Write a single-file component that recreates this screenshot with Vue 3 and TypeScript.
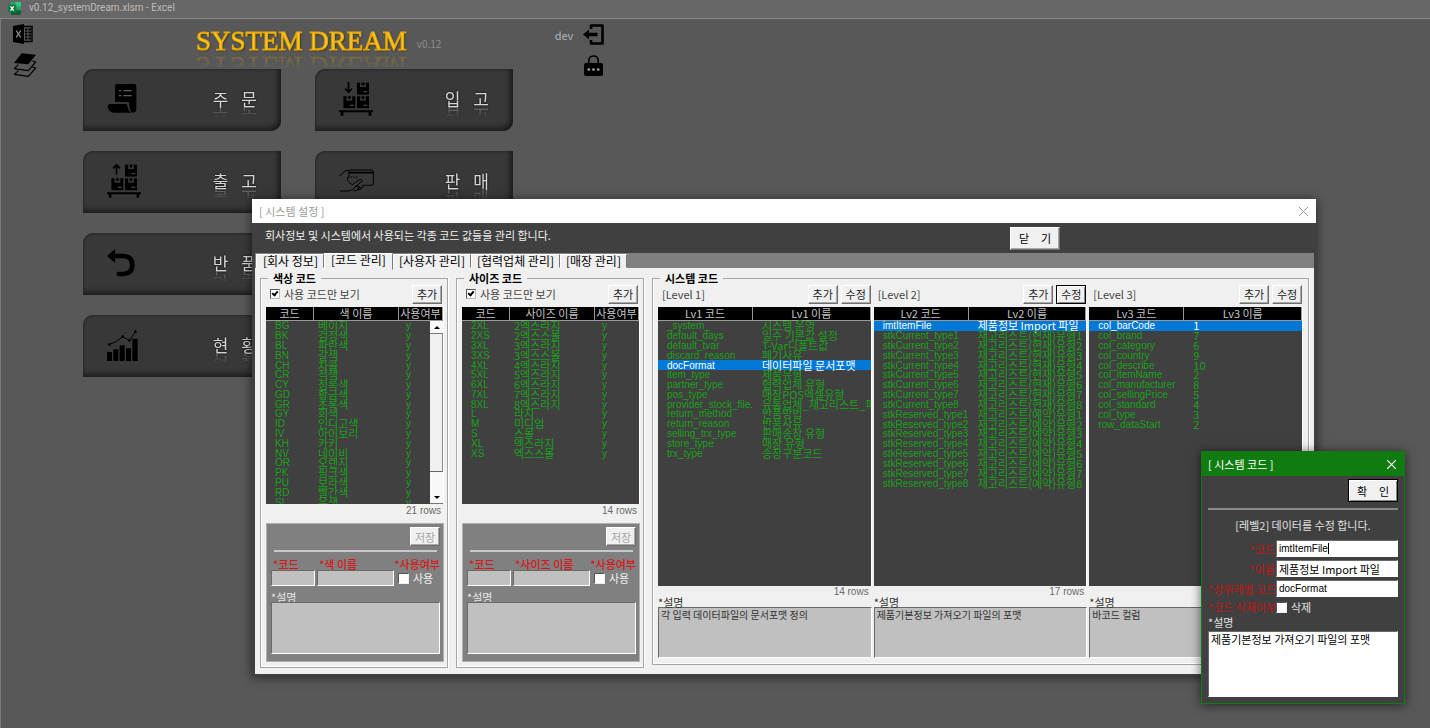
<script setup lang="ts">
import { ref } from 'vue'

interface MenuItem { icon: string; label: string[]; column: 'left' | 'right' }
interface CodePanel {
  id: string
  title: string
  nameHead: string
  rows: string[][]
  count: number
  scroll: boolean
}
interface Level {
  id: string
  label: string
  heads: string[]
  rows: string[][]
  selected: number
  count: string
  focusEdit: boolean
  note: string
}

const menu: MenuItem[] = [
  { icon: 'order', label: ['주', '문'], column: 'left' },
  { icon: 'inbound', label: ['입', '고'], column: 'right' },
  { icon: 'outbound', label: ['출', '고'], column: 'left' },
  { icon: 'sale', label: ['판', '매'], column: 'right' },
  { icon: 'return', label: ['반', '품'], column: 'left' },
  { icon: 'status', label: ['현', '황'], column: 'left' },
]

const tabs = ['[회사 정보]', '[코드 관리]', '[사용자 관리]', '[협력업체 관리]', '[매장 관리]']
const activeTab = ref(1)

const pairs = (text: string): string[][] => text.split('|').map((line) => line.split('='))

const panels: CodePanel[] = [
  {
    id: 'color',
    title: '색상 코드',
    nameHead: '색 이름',
    rows: pairs('BG=베이지|BK=검정색|BL=파란색|BN=갈색|CH=차콜|CR=적색|CY=청록색|GD=황금색|GR=초록색|GY=회색|ID=인디고색|IV=아이보리|KH=카키|NV=네이비|OR=오렌지|PK=핑크색|PU=보라색|RD=빨간색|SL=은색'),
    count: 21,
    scroll: true,
  },
  {
    id: 'size',
    title: '사이즈 코드',
    nameHead: '사이즈 이름',
    rows: pairs('2XL=2엑스라지|2XS=2엑스스몰|3XL=3엑스라지|3XS=3엑스스몰|4XL=4엑스라지|5XL=5엑스라지|6XL=6엑스라지|7XL=7엑스라지|8XL=8엑스라지|L=라지|M=미디엄|S=스몰|XL=엑스라지|XS=엑스스몰'),
    count: 14,
    scroll: false,
  },
]

const numbered = (code: string, name: string): string[][] =>
  Array.from({ length: 8 }, (_, i) => [`${code}${i + 1}`, `${name}${i + 1}`])

const levels: Level[] = [
  {
    id: 'lv1',
    label: '[Level 1]',
    heads: ['Lv1 코드', 'Lv1 이름'],
    rows: pairs('_system_=시스템 운영|default_days=일수 기본값 설정|default_tvar=T-Var디폴트값|discard_reason=폐기사유|docFormat=데이터파일 문서포맷|item_type=제품유형|partner_type=협력업체 유형|pos_type=매장POS엑셀유형|provider_stock_file.=유통업체_재고리스트_파일|return_method=반품방법|return_reason=반품사유|selling_trx_type=판매송장 유형|store_type=매장 유형|trx_type=송장구분코드'),
    selected: 4,
    count: '14 rows',
    focusEdit: false,
    note: '각 입력 데이터파일의 문서포맷 정의',
  },
  {
    id: 'lv2',
    label: '[Level 2]',
    heads: ['Lv2 코드', 'Lv2 이름'],
    rows: [
      ['imtItemFile', '제품정보 Import 파일'],
      ...numbered('stkCurrent_type', '재고리스트(현재)유형'),
      ...numbered('stkReserved_type', '재고리스트(예약)유형'),
    ],
    selected: 0,
    count: '17 rows',
    focusEdit: true,
    note: '제품기본정보 가져오기 파일의 포맷',
  },
  {
    id: 'lv3',
    label: '[Level 3]',
    heads: ['Lv3 코드', 'Lv3 이름'],
    rows: pairs('col_barCode=1|col_brand=7|col_category=6|col_country=9|col_describe=10|col_itemName=2|col_manufacturer=8|col_sellingPrice=5|col_standard=4|col_type=3|row_dataStart=2'),
    selected: 0,
    count: '',
    focusEdit: false,
    note: '바코드 컬럼',
  },
]

const HEAD_HEIGHT = 14
const tableHeight = (rows: string[][]): string =>
  `${HEAD_HEIGHT + Math.round((rows.length * 49) / 5)}px`

const form = ref({
  code: 'imtItemFile',
  name: '제품정보 Import 파일',
  parent: 'docFormat',
  remove: false,
  note: '제품기본정보 가져오기 파일의 포맷',
})
</script>

<template>
  <div class="app">
    <header class="titlebar">
      <svg class="xl" viewBox="0 0 14 14" aria-hidden="true">
        <rect x="3" y="0" width="11" height="14" rx="1" fill="#21a366" />
        <rect x="8" y="0" width="6" height="5" fill="#33c481" />
        <rect x="3" y="9" width="11" height="5" rx="1" fill="#185c37" />
        <rect x="0" y="3" width="9" height="8" rx="1" fill="#107c41" />
        <path d="M2.7 4.8 6.2 9.2M6.2 4.8 2.7 9.2" stroke="#fff" stroke-width="1.3" />
      </svg>
      <span>v0.12_systemDream.xlsm - Excel</span>
    </header>

    <main class="sheet">
      <nav class="rail">
        <button type="button" aria-label="Excel">
          <svg width="20" height="20" viewBox="0 0 20 20">
            <path d="M0 2 11 0v20L0 18z" />
            <path d="M3.200 6.5 7.800 13.500M7.800 6.500 3.200 13.500" stroke="#999" stroke-width="1.200" />
            <path d="M11 2.500h8v15h-8" fill="none" stroke="#000" stroke-width="1.400" />
            <path d="M12 5.500h6M12 8.500h6M12 11.500h6M12 14.500h6" stroke="#000" stroke-width="1.800" stroke-dasharray="2.500 1" />
          </svg>
        </button>
        <button type="button" aria-label="Layers">
          <svg width="24" height="24" viewBox="0 0 72 72">
            <path d="M26 1 69 5 46 34 3 30z" />
            <path d="M16 35 4 47 46 53 68 27 58 24M16 53 4 64 46 70 68 45 58 42" fill="none" stroke="#000" stroke-width="3.500" stroke-linejoin="round" />
          </svg>
        </button>
      </nav>

      <div class="center">
        <div class="brand">
          <h1>SYSTEM DREAM</h1>
          <span>v0.12</span>
        </div>
        <div class="menu">
          <button v-for="item in menu" :key="item.icon" type="button" class="tile" :class="item.column">
            <svg v-if="item.icon === 'order'" width="30" height="30" viewBox="-2 0 90 90">
              <path d="M22 54V6q0-6 6-6h52q6 0 6 6v70q0 10-9 10-9 0-11-14l-3-18z" />
              <path d="M8 60h50q3 22 14 26H22Q2 86 0 68q0-8 8-8z" />
              <path d="M34 20h7M47 20h25M34 35h7M47 35h25" stroke="#5c5c5c" stroke-width="4" />
              <path d="M22 57h38q2 20 9 24" fill="none" stroke="#383838" stroke-width="3" />
            </svg>
            <svg v-else-if="item.icon === 'inbound' || item.icon === 'outbound'" width="34" height="34" viewBox="0 0 100 100">
              <path v-if="item.icon === 'inbound'" d="M28 0v28M18 19l10 11 10-11" fill="none" stroke="#000" stroke-width="5" />
              <path v-else d="M28 31V4M18 13 28 2l10 11" fill="none" stroke="#000" stroke-width="5" />
              <g v-for="[x, y] in [[53, 2], [13, 42], [53, 42]]" :key="`${x}-${y}`">
                <rect :x="x" :y="y" width="35" height="35" />
                <rect :x="x + 9" :y="y - 1" width="17" height="14" fill="#383838" />
                <path :d="`M${x + 13} ${y}h9v6l-4.500 3-4.500-3z`" />
                <rect :x="x + 19" :y="y + 25" width="11" height="3" fill="#555" />
              </g>
              <path d="M0 83h100v6H95v10h-8V89H13v10H5V89H0z" />
            </svg>
            <svg v-else-if="item.icon === 'sale'" width="35" height="24" viewBox="0 0 105 72" fill="none" stroke="#000" stroke-width="3" stroke-linejoin="round" stroke-linecap="round">
              <path d="M2 20 20 5h10" />
              <path d="M30 26V7q0-4 4-4h64q5 0 5 5v36q0 5-5 5H72" />
              <path d="M30 11h73" stroke-width="5" />
              <path d="M36 24h2M44 24h2M52 24h2" />
              <path d="M26 26q-3 10 4 14l10 7 20-14q8-4 10 1 0 4-6 7L50 52q-8 14-22 14H4" />
              <path d="M52 52h8q2 7-3 8M60 56h8q5-1 4-7M57 61q-4 6-12 5M68 57q-2 6-10 6" />
            </svg>
            <svg v-else-if="item.icon === 'return'" width="28" height="28" viewBox="0 0 84 84">
              <path d="M16 21h34q26 2 26 27t-26 27H36" fill="none" stroke="#000" stroke-width="14" stroke-linecap="round" />
              <path d="M0 21 24 0v42z" />
            </svg>
            <svg v-else width="31" height="31" viewBox="0 0 93 93">
              <path d="M0 66h15v27H0zM19 58h15v35H19zM38 46h15v47H38zM57 55h15v38H57zM76 26h16v67H76z" />
              <path d="M6 44 27 35 47 20 67 32 85 5" fill="none" stroke="#000" stroke-width="3" />
              <circle cx="85" cy="5" r="4" /><circle cx="67" cy="31" r="4" /><circle cx="47" cy="20" r="4" /><circle cx="7" cy="44" r="4" />
            </svg>
            <span class="tile-label"><span v-for="ch in item.label" :key="ch">{{ ch }}</span></span>
          </button>
        </div>
      </div>

      <div class="session">
        <span class="user">dev</span>
        <button type="button" aria-label="Logout">
          <svg width="21" height="21" viewBox="0 0 21 21">
            <path d="M8 5V1.500h11.500v18H8V16" fill="none" stroke="#000" stroke-width="2.600" stroke-linejoin="round" />
            <path d="M0 10.500 6 5.500v3.300h8.500v3.400H6v3.300z" />
          </svg>
        </button>
        <button type="button" class="lock" aria-label="Password">
          <svg width="19" height="21" viewBox="0 0 19 21">
            <path d="M4.800 9V6q0-5 4.700-5t4.700 5v3" fill="none" stroke="#000" stroke-width="1.600" />
            <rect x="0" y="8" width="19" height="13" rx="2" />
            <g fill="#aaa"><circle cx="4.800" cy="14.500" r="1.300" /><circle cx="9.500" cy="14.500" r="1.300" /><circle cx="14.200" cy="14.500" r="1.300" /></g>
          </svg>
        </button>
      </div>
    </main>

    <section class="dialog settings" role="dialog" aria-label="시스템 설정">
      <div class="dialog-title">
        <span>[ 시스템 설정 ]</span>
        <button type="button" class="x" aria-label="Close">
          <svg width="9" height="9" viewBox="0 0 9 9"><path d="M0 0 9 9M9 0 0 9" stroke="currentColor" /></svg>
        </button>
      </div>
      <div class="info">
        <p>회사정보 및 시스템에서 사용되는 각종 코드 값들을 관리 합니다.</p>
        <button type="button" class="btn wide"><span>닫</span><span>기</span></button>
      </div>
      <div class="tabs" role="tablist">
        <button
          v-for="(tab, i) in tabs"
          :key="tab"
          type="button"
          role="tab"
          :aria-selected="i === activeTab"
          :class="{ active: i === activeTab }"
          @click="activeTab = i"
        >{{ tab }}</button>
      </div>

      <div class="page">
        <fieldset v-for="panel in panels" :key="panel.id" class="group code-group">
          <legend>{{ panel.title }}</legend>
          <div class="tools">
            <label class="only"><input type="checkbox" class="check small" checked />사용 코드만 보기</label>
            <button type="button" class="btn">추가</button>
          </div>
          <div class="list short">
            <table :style="{ height: tableHeight(panel.rows) }">
              <colgroup><col class="c-code" /><col /><col class="c-use" /></colgroup>
              <thead><tr><th>코드</th><th>{{ panel.nameHead }}</th><th>사용여부</th></tr></thead>
              <tbody>
                <tr v-for="row in panel.rows" :key="row[0]">
                  <td class="code">{{ row[0] }}</td><td>{{ row[1] }}</td><td class="code use">y</td>
                </tr>
              </tbody>
            </table>
            <div v-if="panel.scroll" class="scroll" aria-hidden="true">
              <span class="arrow up"></span>
              <span class="thumb"></span>
              <span class="track"></span>
              <span class="arrow down"></span>
            </div>
          </div>
          <p class="count">{{ panel.count }} rows</p>
          <div class="edit">
            <button type="button" class="btn" disabled>저장</button>
            <hr />
            <div class="fields">
              <label class="req first" :for="`${panel.id}-code`">*코드</label>
              <label class="req" :for="`${panel.id}-name`">*{{ panel.nameHead }}</label>
              <label class="req last" :for="`${panel.id}-use`">*사용여부</label>
              <input :id="`${panel.id}-code`" type="text" class="box" />
              <input :id="`${panel.id}-name`" type="text" class="box" />
              <label class="use-check"><input :id="`${panel.id}-use`" type="checkbox" class="check" />사용</label>
            </div>
            <label class="note-label" :for="`${panel.id}-note`">*설명</label>
            <textarea :id="`${panel.id}-note`" class="box"></textarea>
          </div>
        </fieldset>

        <fieldset class="group system-group">
          <legend>시스템 코드</legend>
          <div class="levels">
            <div v-for="level in levels" :key="level.id" class="level">
              <div class="tools">
                <span class="level-name">{{ level.label }}</span>
                <button type="button" class="btn">추가</button>
                <button type="button" class="btn" :class="{ focused: level.focusEdit }">수정</button>
              </div>
              <div class="list tall">
                <table :style="{ height: tableHeight(level.rows) }">
                  <colgroup><col class="c-level" /><col /></colgroup>
                  <thead><tr><th v-for="head in level.heads" :key="head">{{ head }}</th></tr></thead>
                  <tbody>
                    <tr v-for="(row, i) in level.rows" :key="row[0]" :class="{ selected: i === level.selected }">
                      <td class="code">{{ row[0] }}</td><td class="name">{{ row[1] }}</td>
                    </tr>
                  </tbody>
                </table>
              </div>
              <p class="count">{{ level.count }}</p>
              <label class="note-label" :for="`${level.id}-note`">*설명</label>
              <textarea :id="`${level.id}-note`" class="box" :value="level.note" readonly></textarea>
            </div>
          </div>
        </fieldset>
      </div>
    </section>

    <section class="dialog editor" role="dialog" aria-label="시스템 코드">
      <div class="dialog-title">
        <span>[ 시스템 코드 ]</span>
        <button type="button" class="x" aria-label="Close">
          <svg width="9" height="9" viewBox="0 0 9 9"><path d="M0 0 9 9M9 0 0 9" stroke="currentColor" stroke-width="1.200" /></svg>
        </button>
      </div>
      <form class="editor-body" @submit.prevent>
        <button type="submit" class="btn wide focused"><span>확</span><span>인</span></button>
        <hr />
        <p>[레벨2] 데이터를 수정 합니다.</p>
        <div class="editor-fields">
          <label for="f-code">*코드</label>
          <div class="caret-box box"><input id="f-code" v-model="form.code" type="text" class="code" /></div>
          <label for="f-name">*이름</label>
          <input id="f-name" v-model="form.name" type="text" class="box" />
          <label for="f-parent">*상위레벨 코드</label>
          <input id="f-parent" v-model="form.parent" type="text" class="box code" />
          <label for="f-remove">*코드 삭제여부</label>
          <div class="remove"><input id="f-remove" v-model="form.remove" type="checkbox" class="check" />삭제</div>
        </div>
        <label class="note-label" for="f-note">*설명</label>
        <textarea id="f-note" v-model="form.note" class="box"></textarea>
      </form>
    </section>
  </div>
</template>

<style>
body {
  margin: 0;
  background: #585858;
}
</style>

<style scoped>
.app {
  position: relative;
  min-height: 100vh;
  overflow: hidden;
  background: #585858;
  color: #000;
  font-family: "Noto Sans CJK KR", "Liberation Sans", sans-serif;
  font-size: 11px;
  line-height: 12px;
}
.app *,
.app *::before {
  box-sizing: border-box;
}
button,
input,
textarea {
  font: inherit;
}
button {
  padding: 0;
  border: 0;
  background: none;
}
p {
  margin: 0;
}

/* workbook window */
.titlebar {
  display: flex;
  align-items: center;
  gap: 8px;
  height: 19px;
  padding: 0 8px 2px;
  border-bottom: 1px solid #868686;
  background: #676767;
  color: #bcbcbc;
  font-family: Roboto, sans-serif;
  font-size: 10px;
}
.xl {
  width: 13px;
  height: 13px;
}
.sheet {
  display: flex;
  align-items: flex-start;
  min-height: calc(100vh - 19px);
  border-left: 1px solid #7a7a7a;
}
.rail {
  display: flex;
  flex-direction: column;
  gap: 9px;
  width: 82px;
  padding: 5px 11px 5px 12px;
}
.rail button,
.session button {
  display: flex;
}
.center {
  width: 430px;
}
.brand {
  display: flex;
  align-items: flex-start;
  gap: 10px;
  height: 50px;
  padding: 5px 0 0 113px;
}
.brand h1 {
  margin: 0;
  color: #f6c92c;
  font-family: "Liberation Serif", serif;
  font-size: 27px;
  font-weight: 400;
  line-height: 34px;
  -webkit-text-stroke: 1px #e5a400;
  text-shadow: 1px 1px 2px #3c2e00;
  white-space: nowrap;
  -webkit-box-reflect: below -9px linear-gradient(transparent 40%, rgba(0, 0, 0, 0.3));
}
.brand span {
  padding-top: 14px;
  color: #8c8c8c;
  font-size: 10px;
}
.menu {
  display: grid;
  grid-template-columns: 1fr 1fr;
  gap: 20px 34px;
}
.tile {
  display: flex;
  align-items: center;
  justify-content: space-between;
  height: 62px;
  padding: 0 24px 2px;
  border-radius: 10px 0 10px 0;
  background: #383838;
  box-shadow: inset -3px -3px 5px #1c1c1c, inset 1px 1px 2px #2c2c2c;
}
.tile.left {
  grid-column: 1;
}
.tile.right {
  grid-column: 2;
}
.tile-label {
  display: flex;
  gap: 13px;
  color: #d6d6d6;
  font-size: 17px;
  line-height: 20px;
  text-shadow: 0 0 2px #000;
  -webkit-box-reflect: below -4px linear-gradient(transparent 35%, rgba(0, 0, 0, 0.4));
}
.session {
  display: grid;
  grid-template-columns: 20px 21px;
  align-items: center;
  justify-items: center;
  gap: 10px 9px;
  padding: 5px 0 0 41px;
  color: #b4b4b4;
}
.lock {
  grid-column: 2;
}

/* shared window parts */
.dialog {
  position: absolute;
  box-shadow: 0 1px 10px rgba(0, 0, 0, 0.6);
}
.dialog-title {
  display: flex;
  align-items: center;
  justify-content: space-between;
  height: 24px;
  padding: 0 8px 0 7px;
}
.x {
  display: flex;
  color: inherit;
}
.btn {
  min-width: 30px;
  height: 19px;
  border: 1px solid;
  border-color: #fff #6e6e6e #6e6e6e #fff;
  background: #f0f0f0;
  box-shadow: inset -1px -1px #a8a8a8;
  color: #222;
  line-height: 16px;
}
.btn:disabled {
  color: #a4a4a4;
}
.btn.focused {
  border-color: #000;
  box-shadow: inset 1px 1px #fff, inset -1px -1px #888;
}
.btn.wide {
  display: flex;
  align-items: center;
  justify-content: space-between;
  width: 50px;
  height: 23px;
  padding: 0 8px;
  color: #000;
}
.box {
  margin: 0;
  border: 1px solid;
  border-color: #6a6a6a #fff #fff #6a6a6a;
  border-radius: 0;
  background: #c0c0c0;
  outline: 0;
}
textarea {
  display: block;
  width: 100%;
  padding: 1px 2px;
  resize: none;
  overflow: hidden;
}
.check {
  position: relative;
  flex: none;
  width: 11px;
  height: 11px;
  margin: 0;
  border: 1px solid;
  border-color: #555 #eee #eee #555;
  background: #fff;
  appearance: none;
}
.check.small {
  width: 10px;
  height: 10px;
  border-color: #555 #bbb #bbb #555;
}
.check:checked::before {
  position: absolute;
  top: 0;
  left: 2px;
  width: 4px;
  height: 6px;
  border: solid #000;
  border-width: 0 2px 2px 0;
  content: "";
  transform: rotate(40deg);
}
hr {
  height: 2px;
  margin: 0;
  border: 0;
  background: #c8c8c8;
}

/* settings window */
.settings {
  top: 199px;
  right: 114px;
  left: 252px;
  border: solid #404040;
  border-width: 0 2px 2px 3px;
  background: #f0f0f0;
}
.settings .dialog-title {
  margin: 0 -2px 0 -3px;
  background: #fff;
  color: #9a9a9a;
}
.info {
  display: flex;
  align-items: center;
  justify-content: space-between;
  height: 30px;
  padding: 0 254px 0 10px;
  background: #404040;
  color: #f0f0f0;
}
.info p {
  padding-bottom: 7px;
}
.tabs {
  display: flex;
  align-items: flex-end;
  height: 15px;
  padding-left: 1px;
  background: #808080;
}
.tabs button {
  height: 14px;
  padding: 0 5px;
  border: 1px solid;
  border-color: #fff #777 #f0f0f0 #fff;
  background: #f0f0f0;
  font-size: 12px;
  line-height: 12px;
  white-space: nowrap;
}
.tabs button:first-child {
  padding-left: 6px;
}
.tabs .active {
  position: relative;
  height: 17px;
  margin-bottom: -2px;
  padding: 0 6px 4px;
}
.page {
  display: grid;
  grid-template-columns: 188px 188px minmax(0, 1fr);
  align-items: start;
  gap: 8px;
  padding: 4px 5px 6px;
}
.group {
  min-width: 0;
  margin: 0;
  padding: 0 3px 5px 5px;
  border: 1px solid #a6a6a6;
  box-shadow: inset 1px -1px #fff, 1px 0 #fff;
}
.system-group {
  padding: 0 5px 6px;
}
.group legend {
  margin-left: 2px;
  padding: 0 5px;
  font-weight: 700;
  line-height: 12px;
}
.tools {
  display: flex;
  align-items: center;
  gap: 3px;
  height: 20px;
  padding: 0 2px 0 4px;
  color: #444;
}
.level .tools {
  padding-right: 1px;
}
.only {
  display: flex;
  flex: 1;
  align-items: center;
  gap: 4px;
}
.level-name {
  flex: 1;
}
.list {
  position: relative;
  margin-top: 3px;
  overflow: hidden;
  border-right: 1px solid #fff;
  background: #404040;
}
.list.short {
  height: 197px;
}
.list.tall {
  height: 279px;
}
table {
  width: 100%;
  border-spacing: 0;
  table-layout: fixed;
}
.c-code {
  width: 48px;
}
.c-use {
  width: 44px;
}
.c-level {
  width: 95px;
}
th {
  height: 14px;
  padding: 0;
  border-right: 1px solid #999;
  border-bottom: 1px solid #999;
  background: #000;
  color: #c4c4c4;
  font-weight: 400;
  line-height: 12px;
  vertical-align: top;
  white-space: nowrap;
}
td {
  padding: 0 0 0 4px;
  color: #18a018;
  line-height: 9px;
  white-space: nowrap;
}
td:first-child,
td.name {
  padding-left: 9px;
}
td.use {
  padding-left: 7px;
}
.code {
  font-family: "Liberation Sans", sans-serif;
  font-size: 10px;
}
.selected td {
  background: #0078d7;
  color: #fff;
}
.scroll {
  position: absolute;
  top: 14px;
  right: 0;
  bottom: 0;
  display: flex;
  flex-direction: column;
  width: 13px;
  background: #f8f8f8;
}
.arrow {
  display: flex;
  align-items: center;
  justify-content: center;
  height: 13px;
  border-bottom: 1px solid #777;
}
.arrow::before {
  border: 3px solid transparent;
  content: "";
}
.up::before {
  border-top: 0;
  border-bottom-color: #000;
}
.down::before {
  border-bottom: 0;
  border-top-color: #000;
}
.thumb {
  flex: 1;
  border-right: 1px solid #888;
  border-bottom: 1px solid #666;
  background: #f0f0f0;
}
.track {
  height: 19px;
}
.count {
  height: 13px;
  padding-right: 3px;
  color: #6a6a6a;
  font-family: "Liberation Sans", sans-serif;
  font-size: 10px;
  line-height: 13px;
  text-align: right;
}
.edit {
  display: flex;
  flex-direction: column;
  margin-top: 6px;
  padding: 3px 3px 7px 4px;
  border: 1px solid #fff;
  outline: 1px solid #b0b0b0;
  outline-offset: -1px;
  background: #808080;
}
.edit .btn {
  align-self: flex-end;
}
.edit hr {
  margin: 4px 3px 6px;
}
.fields {
  display: grid;
  grid-template-columns: 44px 77px minmax(0, 1fr);
  gap: 0 2px;
}
.fields .box {
  width: 100%;
  height: 16px;
}
.req {
  padding-left: 2px;
  color: #d81818;
  font-weight: 500;
  white-space: nowrap;
}
.req.last {
  justify-self: end;
  padding-left: 0;
}
.use-check {
  display: flex;
  align-items: center;
  gap: 4px;
  padding-left: 2px;
  color: #f0f0f0;
}
.note-label {
  display: block;
  line-height: 10px;
}
.edit .note-label {
  margin: 6px 0 0;
  color: #e6e6e6;
}
.edit textarea {
  height: 52px;
}
.levels {
  display: grid;
  grid-template-columns: repeat(3, minmax(0, 1fr));
  gap: 2px;
}
.level .count {
  height: 11px;
  line-height: 11px;
}
.level .note-label {
  color: #333;
}
.level textarea {
  height: 51px;
  color: #333;
  font-size: 10px;
}

/* editor window */
.editor {
  top: 451px;
  right: 25px;
  width: 204px;
  border: 1px solid #107c10;
  background: #404040;
}
.editor .dialog-title {
  padding: 0 8px 0 6px;
  background: #107c10;
  color: #fff;
}
.editor-body {
  display: flex;
  flex-direction: column;
  padding: 3px 6px 6px;
  color: #e0e0e0;
}
.editor-body > .btn {
  align-self: flex-end;
}
.editor hr {
  margin: 6px 0 9px;
  background: #8a8a8a;
}
.editor-body p {
  text-align: center;
}
.editor-fields {
  display: grid;
  grid-template-columns: 68px minmax(0, 1fr);
  align-items: center;
  gap: 3px 0;
  margin-top: 9px;
}
.editor-fields label {
  padding-right: 1px;
  color: #c01414;
  text-align: right;
  white-space: nowrap;
}
.editor .box {
  width: 100%;
  background: #fff;
  color: #000;
}
.editor-fields .box {
  height: 17px;
  padding: 0 2px;
}
.caret-box {
  display: flex;
  align-items: center;
}
.caret-box input {
  padding: 0;
  border: 0;
  outline: 0;
  field-sizing: content;
}
.caret-box::after {
  width: 1px;
  height: 11px;
  background: #000;
  content: "";
}
.remove {
  display: flex;
  align-items: center;
  gap: 4px;
  height: 14px;
}
.editor .note-label {
  margin: 3px 0 4px;
}
.editor textarea {
  height: 66px;
}
</style>
